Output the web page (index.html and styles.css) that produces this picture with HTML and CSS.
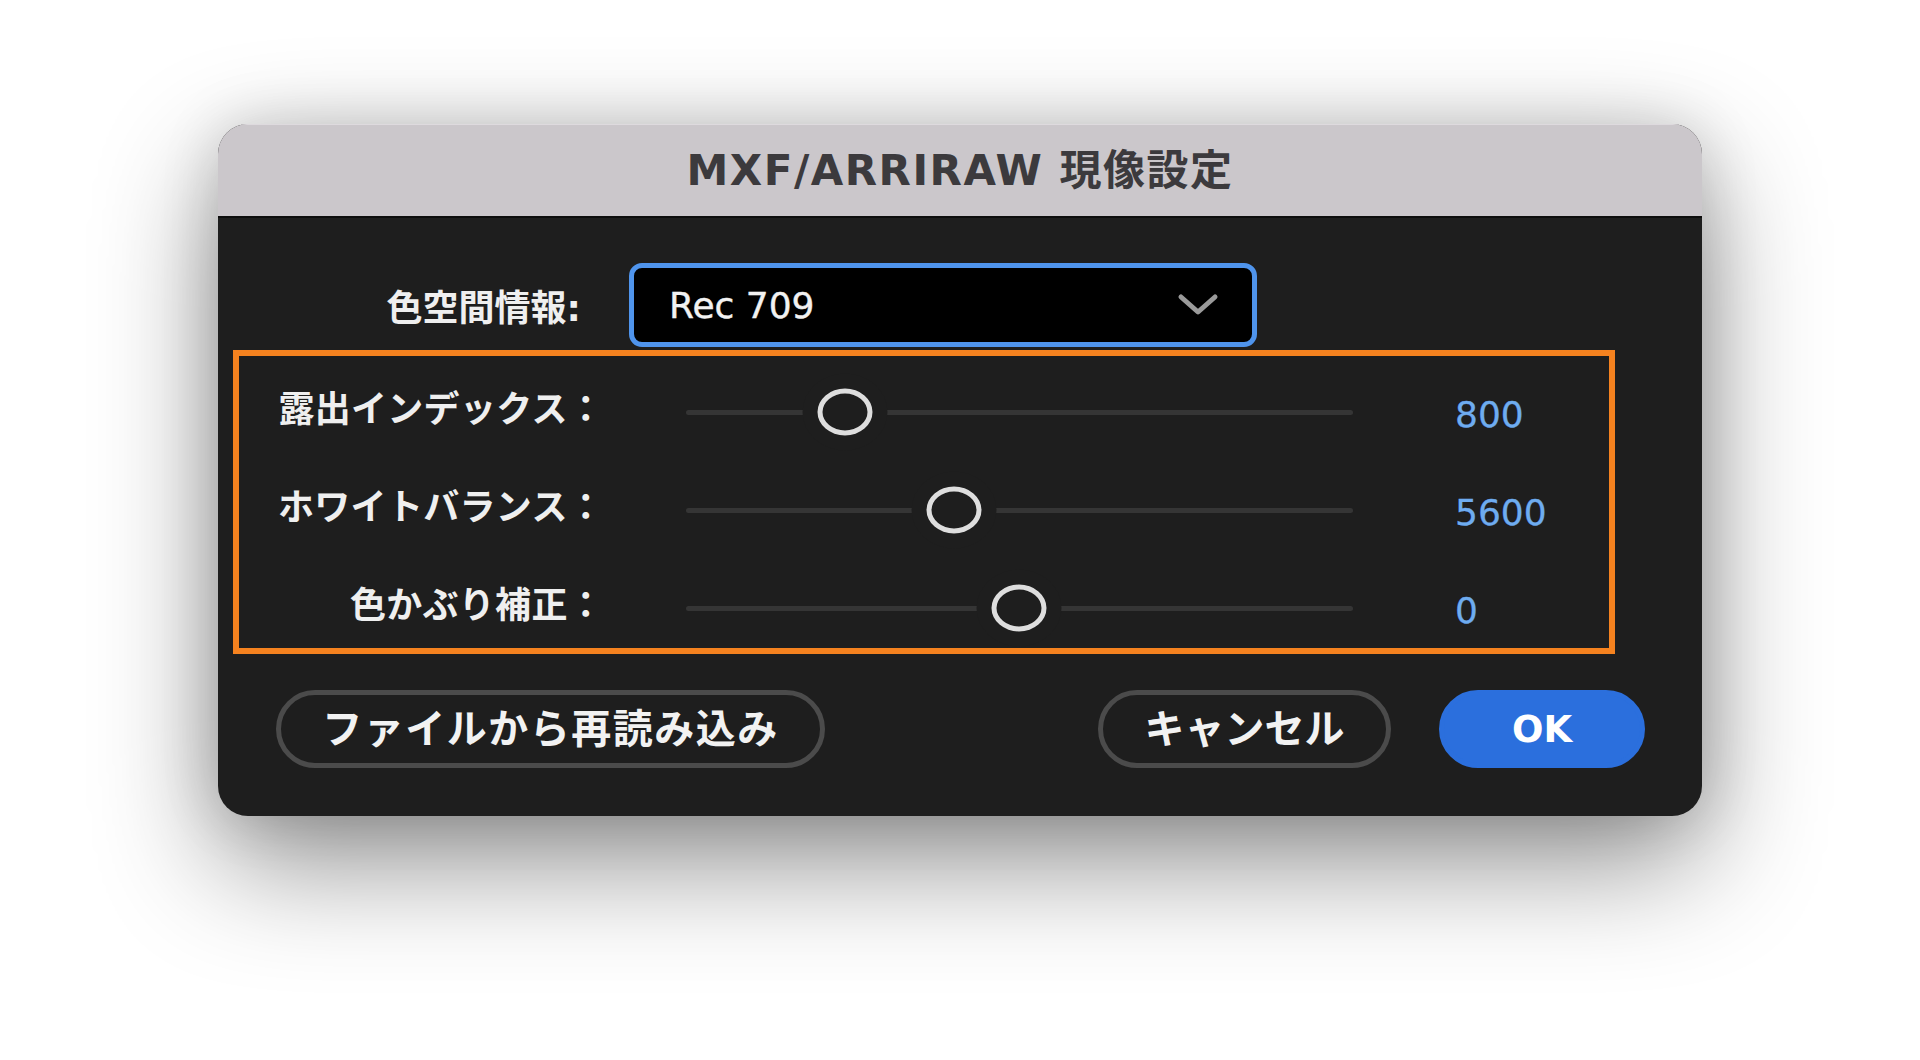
FILE: index.html
```html
<!DOCTYPE html>
<html lang="ja">
<head>
<meta charset="utf-8">
<title>MXF/ARRIRAW 現像設定</title>
<link rel="stylesheet" href="styles.css">
</head>
<body>
<div class="dialog">
  <div class="titlebar">MXF/ARRIRAW 現像設定</div>
  <div class="content">
    <div class="colorspace-row">
      <span class="label">色空間情報:</span>
      <div class="select">
        <span class="select-value">Rec 709</span>
        <svg class="chevron" width="42" height="24" viewBox="0 0 42 24"><polyline points="4,4 21,19 38,4" fill="none" stroke="#9a9a9a" stroke-width="5" stroke-linecap="round" stroke-linejoin="round"/></svg>
      </div>
    </div>
    <div class="highlight">
      <div class="slider-row">
        <span class="label slider-label">露出インデックス：</span>
        <div class="track"><span class="thumb" style="left: 23.8%"></span></div>
        <span class="value">800</span>
      </div>
      <div class="slider-row">
        <span class="label slider-label">ホワイトバランス：</span>
        <div class="track"><span class="thumb" style="left: 40.2%"></span></div>
        <span class="value">5600</span>
      </div>
      <div class="slider-row">
        <span class="label slider-label">色かぶり補正：</span>
        <div class="track"><span class="thumb" style="left: 49.9%"></span></div>
        <span class="value">0</span>
      </div>
    </div>
    <div class="buttons">
      <button class="btn btn-reload">ファイルから再読み込み</button>
      <button class="btn btn-cancel">キャンセル</button>
      <button class="btn btn-ok">OK</button>
    </div>
  </div>
</div>
</body>
</html>
```

FILE: styles.css
```css
html, body {
  margin: 0;
  padding: 0;
  background: #ffffff;
}

body {
  width: 1920px;
  height: 1060px;
  overflow: hidden;
  font-family: "DejaVu Sans", "Noto Sans CJK JP", sans-serif;
}

.dialog {
  width: 1484px;
  margin: 124px auto 0;
  border-radius: 30px;
  overflow: hidden;
  background: #1e1e1e;
  box-shadow: 0 45px 120px rgba(0, 0, 0, 0.45), 0 0 60px rgba(0, 0, 0, 0.14);
}

.titlebar {
  height: 94px;
  box-sizing: border-box;
  background: #cbc7cb;
  border-top: 1px solid #dedade;
  border-bottom: 2px solid #0e0e0e;
  display: flex;
  align-items: center;
  justify-content: center;
  padding-bottom: 8px;
  color: #3c3a3d;
  font-family: "DejaVu Sans", "Noto Sans CJK JP", sans-serif;
  font-weight: 700;
  font-size: 42px;
  letter-spacing: 1.5px;
}

.content {
  padding: 45px 57px 48px 15px;
}

.label {
  color: #efefef;
  font-family: "DejaVu Sans", "Noto Sans CJK JP", sans-serif;
  font-weight: 700;
  font-size: 36px;
  text-align: right;
  white-space: nowrap;
}

.colorspace-row {
  display: grid;
  grid-template-columns: 348px 628px;
  column-gap: 48px;
  align-items: center;
}

.select {
  height: 84px;
  box-sizing: border-box;
  border: 5px solid #4f94ec;
  border-radius: 13px;
  background: #000000;
  display: flex;
  align-items: center;
  justify-content: space-between;
  padding: 0 33px 0 35px;
}

.select-value {
  color: #f2f2f2;
  font-size: 36px;
  font-family: "DejaVu Sans", sans-serif;
  -webkit-text-stroke: 0.4px #f2f2f2;
}

.chevron {
  display: block;
}

.highlight {
  margin-top: 3px;
  width: 1382px;
  height: 304px;
  box-sizing: border-box;
  border: 6px solid #f5821f;
  padding: 24px 0 12px;
  display: flex;
  flex-direction: column;
  gap: 38px;
}

.slider-row {
  height: 60px;
  display: grid;
  grid-template-columns: 365px 749px 1fr;
  align-items: center;
}

.slider-label {
  padding-bottom: 12px;
  letter-spacing: 0.3px;
}

.slider-row .track {
  margin-left: 82px;
}

.track {
  position: relative;
  height: 5px;
  background: #353535;
  border-radius: 3px;
}

.thumb {
  position: absolute;
  top: 50%;
  width: 55px;
  height: 47px;
  box-sizing: border-box;
  border: 5px solid #dedede;
  border-radius: 50%;
  background: #1e1e1e;
  box-shadow: 0 0 0 15px #1e1e1e;
  transform: translate(-50%, -50%);
}

.value {
  margin-left: 102px;
  color: #6eacf0;
  font-family: "DejaVu Sans", sans-serif;
  font-size: 36px;
  padding-top: 4px;
  -webkit-text-stroke: 0.3px #6eacf0;
}

.buttons {
  margin-top: 36px;
  padding-left: 43px;
  display: flex;
  align-items: center;
}

.btn {
  height: 78px;
  box-sizing: border-box;
  border: 5px solid #4b4b4b;
  border-radius: 39px;
  background: #1e1e1e;
  color: #f2f2f2;
  font-family: "DejaVu Sans", "Noto Sans CJK JP", sans-serif;
  font-weight: 700;
  font-size: 40px;
  padding: 0;
  text-align: center;
  line-height: 1;
}

.btn-reload {
  width: 549px;
  letter-spacing: 1.5px;
}

.btn-cancel {
  width: 293px;
  margin-left: auto;
}

.btn-ok {
  width: 206px;
  margin-left: 48px;
  background: #2b6fdd;
  border-color: #2b6fdd;
  color: #ffffff;
  font-size: 37px;
}
```
